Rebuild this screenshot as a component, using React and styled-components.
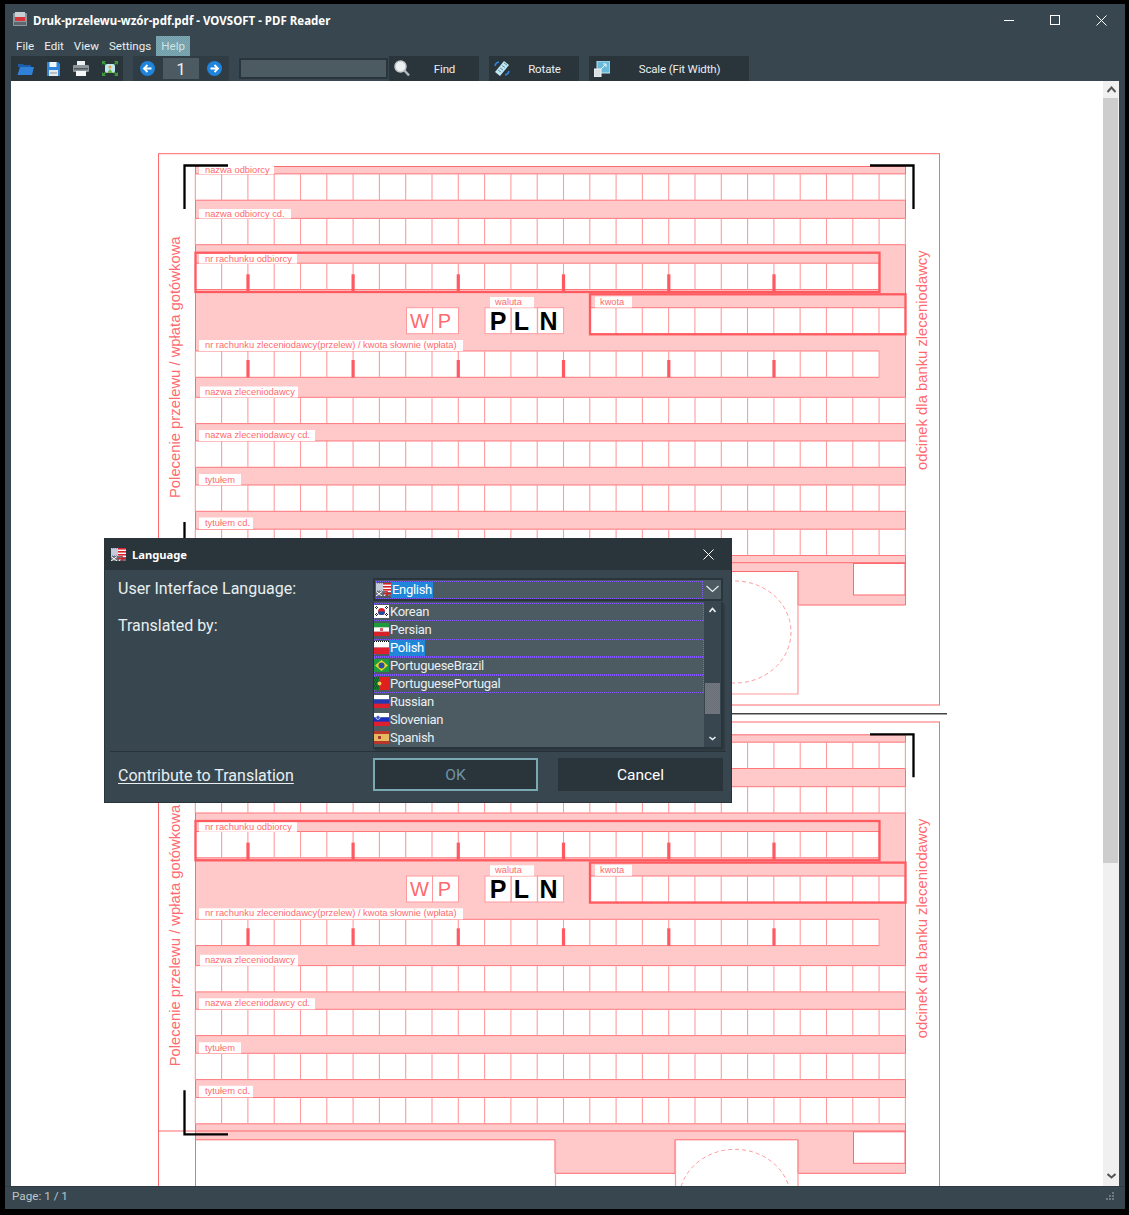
import React from 'react';
import styled, { createGlobalStyle, css } from 'styled-components';

const UI_FONT = `Roboto, "Noto Sans", "Liberation Sans", sans-serif`;
const TITLE_FONT = `"Noto Sans", "Open Sans", "Liberation Sans", sans-serif`;
const BAR = '#38474f';
const DARK = '#2a343b';
const FIELD = '#4c5a62';
const TEXT = '#e9eff1';
const BLUE = '#1f86d8';
const LINE = '#ff6a6e';
const SOFT = '#ff9b9e';
const PINK = '#ffc9ca';
const FOCUS = '#8358ff';
const PDF_FONT = `"Liberation Sans", Arial, sans-serif`;

const GlobalStyle = createGlobalStyle`
  html, body { margin: 0; padding: 0; background: #000; }
  body { font-family: ${UI_FONT}; }
`;

const dither = (a, b) => css`
  background-color: ${a};
  background-image: repeating-conic-gradient(${b} 0 25%, transparent 0 50%);
  background-size: 2px 2px;
`;

// the dotted focus frame of the Windows list box, one pixel on, one off
const focusFrame = css`
  background-image:
    repeating-linear-gradient(90deg, ${FOCUS} 0 1px, transparent 1px 2px),
    repeating-linear-gradient(90deg, ${FOCUS} 0 1px, transparent 1px 2px),
    repeating-linear-gradient(0deg, ${FOCUS} 0 1px, transparent 1px 2px),
    repeating-linear-gradient(0deg, ${FOCUS} 0 1px, transparent 1px 2px);
  background-size: 100% 1px, 100% 1px, 1px 100%, 1px 100%;
  background-position: 0 0, 0 100%, 0 0, 100% 0;
  background-repeat: no-repeat;
`;

const Screen = styled.div`
  width: 1129px;
  height: 1215px;
  padding: 4px 4px 6px 5px;
  box-sizing: border-box;
  background: #000;
`;

const Window = styled.div`
  position: relative;
  width: 100%;
  height: 100%;
  display: flex;
  flex-direction: column;
  background: ${BAR};
  overflow: hidden;
`;

const TitleBar = styled.div`
  height: 32px;
  display: flex;
  align-items: center;
  padding-left: 7px;
  flex: none;
`;

const WindowTitle = styled.span`
  margin-left: 5px;
  font-family: ${TITLE_FONT};
  color: #fff;
  font-size: 11.5px;
  font-weight: 700;
  white-space: nowrap;
`;

const WindowButtons = styled.div`
  margin-left: auto;
  display: flex;
  gap: 36px;
  padding-right: 18px;
  color: #fff;
`;

const MenuBar = styled.div`
  height: 20px;
  display: flex;
  padding-left: 6px;
  flex: none;
`;

const MenuItem = styled.div`
  padding: 0 5px;
  line-height: 20px;
  font-size: 11.6px;
  color: ${(p) => (p.$active ? '#cfe3e6' : TEXT)};
  ${(p) => p.$active && dither('#6f9ca8', '#7fa9b3')}
`;

const ToolBar = styled.div`
  height: 25px;
  display: flex;
  gap: 10px;
  padding-left: 6px;
  flex: none;
`;

const ToolGroup = styled.div`
  width: ${(p) => p.$w}px;
  display: flex;
  align-items: center;
  background: ${DARK};
  box-sizing: border-box;
`;

const IconStrip = styled(ToolGroup)`
  justify-content: space-between;
  padding: 0 5px 0 6px;
`;

const PageGroup = styled(ToolGroup)`
  ${dither('#2e3a41', '#333f46')}
  padding: 0 7px;
  justify-content: space-between;
`;

const PageNumber = styled.div`
  width: 36px;
  height: 21px;
  line-height: 22px;
  background: ${FIELD};
  color: ${TEXT};
  text-align: center;
  font-size: 17px;
`;

const SearchBox = styled.div`
  width: 149px;
  height: 21px;
  margin-top: 2px;
  margin-right: -10px;
  background: ${FIELD};
  border: 2px solid ${DARK};
  box-sizing: border-box;
`;

const ToolButton = styled(ToolGroup)`
  padding-left: 5px;
  ${(p) => p.$first && 'margin-left: 1px;'}
`;

const ToolLabel = styled.span`
  flex: 1;
  text-align: center;
  font-size: 11.5px;
  letter-spacing: -0.15px;
  color: ${TEXT};
  white-space: nowrap;
`;

const Main = styled.div`
  flex: 1;
  min-height: 0;
  display: flex;
  margin: 0 6px;
`;

const DocView = styled.div`
  flex: 1;
  min-width: 0;
  background: #fff;
  overflow: hidden;
`;

const DocPage = styled.svg`
  display: block;
`;

const ScrollTrack = styled.div`
  width: 16px;
  display: flex;
  flex-direction: column;
  background: #f0f0f0;
  color: #555;
`;

const ScrollEnd = styled.div`
  height: 17px;
  display: flex;
  align-items: center;
  justify-content: center;
  ${(p) => p.$bottom && 'margin-top: auto; margin-bottom: 1px;'}
`;

const ScrollThumb = styled.div`
  height: 765px;
  margin-right: 1px;
  background: #cdcdcd;
`;

const StatusBar = styled.div`
  height: 23px;
  flex: none;
  display: flex;
  align-items: center;
  justify-content: space-between;
  padding: 0 10px 4px 7px;
  font-size: 11.7px;
  color: #bcc6ca;
  border-top: 1px solid #2f3b42;
  box-sizing: border-box;
`;

const Dialog = styled.div`
  position: absolute;
  left: 99px;
  top: 534px;
  width: 628px;
  height: 265px;
  box-sizing: border-box;
  background: ${BAR};
  display: flex;
  flex-direction: column;
  outline: 1px solid ${DARK};
  outline-offset: -1px;
`;

const DialogTitle = styled.div`
  height: 32px;
  flex: none;
  display: flex;
  align-items: center;
  padding: 0 18px 0 7px;
  background: ${DARK};
  color: #fff;
`;

const DialogCaption = styled.span`
  margin-left: 6px;
  font-family: ${TITLE_FONT};
  font-size: 11.2px;
  font-weight: 700;
`;

const DialogClose = styled.span`
  margin-left: auto;
  display: flex;
`;

const DialogBody = styled.div`
  display: grid;
  grid-template-columns: 255px 350px;
  padding: 8px 0 0 14px;
  height: 181px;
  box-sizing: border-box;
  flex: none;
`;

const FieldLabels = styled.div`
  display: flex;
  flex-direction: column;
  gap: 15px;
`;

const FieldLabel = styled.div`
  height: 22px;
  line-height: 22px;
  font-size: 16px;
  color: ${TEXT};
`;

const LanguagePicker = styled.div`
  position: relative;
`;

const Combo = styled.div`
  height: 23px;
  display: flex;
  box-sizing: border-box;
  border: 2px solid ${DARK};
  background: ${FIELD};
`;

const ComboValue = styled.div`
  flex: 1;
  margin: 1px 0 0 1px;
  height: 18px;
  padding-bottom: 1px;
  box-sizing: border-box;
  display: flex;
  align-items: center;
  ${focusFrame}
`;

const ComboArrow = styled.div`
  width: 18px;
  display: flex;
  align-items: center;
  justify-content: center;
  color: ${TEXT};
`;

const ListBox = styled.div`
  margin-top: 1px;
  height: 147px;
  display: flex;
  box-sizing: border-box;
  border-left: 1px solid ${DARK};
  border-right: 2px solid ${DARK};
  border-bottom: 2px solid ${DARK};
  background: ${FIELD};
  box-shadow: 2px 2px 0 #2f3b42;
`;

const ListItems = styled.div`
  flex: 1;
  padding-top: 1px;
`;

const ListRow = styled.div`
  height: 18px;
  padding-bottom: 1px;
  box-sizing: border-box;
  display: flex;
  align-items: center;
  ${(p) => p.$focus && focusFrame}
`;

const ItemText = styled.span`
  font-size: 13px;
  letter-spacing: -0.3px;
  line-height: 16px;
  padding: 0 ${(p) => (p.$selected ? '1px' : '0')} 0 1px;
  color: ${(p) => (p.$selected ? '#fff' : TEXT)};
  background: ${(p) => (p.$selected ? BLUE : 'transparent')};
`;

const ListScroll = styled.div`
  width: 17px;
  position: relative;
  background: ${BAR};
  color: ${TEXT};
  display: flex;
  flex-direction: column;
  justify-content: space-between;
  align-items: center;
  padding: 5px 0;
  box-sizing: border-box;
`;

const ListThumb = styled.div`
  position: absolute;
  left: 1px;
  top: 81px;
  width: 15px;
  height: 31px;
  ${dither('#696f78', '#74787f')}
`;

const Divider = styled.div`
  height: 1px;
  flex: none;
  margin: 0 6px;
  background: #28323a;
`;

const DialogFooter = styled.div`
  display: grid;
  grid-template-columns: 255px 165px 165px;
  padding: 6px 0 0 14px;
  align-items: center;
`;

const LinkText = styled.a`
  font-size: 16px;
  line-height: 21px;
  padding-top: 2px;
  color: ${TEXT};
  text-decoration: underline;
  text-underline-offset: 2px;
`;

const DialogButton = styled.div`
  height: 33px;
  line-height: 31px;
  box-sizing: border-box;
  text-align: center;
  font-size: 15.5px;
  background: ${DARK};
  border: 2px solid ${(p) => (p.$focus ? '#7aa9b3' : DARK)};
  color: ${(p) => (p.$disabled ? '#6f94a4' : '#fff')};
  ${(p) => p.$push && 'margin-left: 20px; width: 165px;'}
`;

const Flag = ({ children }) => (
  <svg width="15" height="13" viewBox="0 0 15 13" style={{ flex: 'none' }}>
    {children}
  </svg>
);

const Bands = ({ colors }) => {
  const h = 13 / colors.length;
  return colors.map((c, i) => <rect key={i} x="0" y={i * h} width="15" height={h + 0.2} fill={c} />);
};

const flags = {
  English: (
    <Flag>
      <rect width="15" height="13" fill="#fff" />
      {[0, 3, 6].map((y) => <rect key={y} x="7" y={y} width="8" height="1.600" fill="#d8222a" />)}
      <rect width="7" height="8" fill="#8d97b8" />
      <path d="M0 1h7M0 3h7M0 5h7M0 7h7" stroke="#fff" strokeWidth="1" strokeDasharray="1 1" />
      <path d="M1 2h6M1 4h6M1 6h6" stroke="#fff" strokeWidth="1" strokeDasharray="1 1" />
      <rect y="8" width="15" height="5" fill="#6b727c" />
      <path d="M0 8.500l6 4.500M6 8.500L0 13M8 13l3-4.500h4" stroke="#fff" strokeWidth="1" fill="none" />
      <path d="M11 8v5M7 10.500h8" stroke="#c8222a" strokeWidth="1.500" />
    </Flag>
  ),
  Korean: (
    <Flag>
      <rect width="15" height="13" fill="#fff" />
      <circle cx="7.5" cy="6.5" r="3.5" fill="#d8222a" />
      <path d="M4 6.5a3.5 3.5 0 0 0 7 0z" fill="#1a4ea0" />
      <path d="M1 2l2 2M2 1l2 2M11 9l2 2M12 8l2 2M13 1l-2 2M14 2l-2 2M3 8l-2 2M4 9l-2 2" stroke="#222" strokeWidth="1" />
    </Flag>
  ),
  Persian: (
    <Flag>
      <Bands colors={['#1f9a3c', '#fff', '#d8222a']} />
      <rect x="6" y="5" width="3" height="3" fill="#d8606a" />
    </Flag>
  ),
  Polish: (
    <Flag>
      <Bands colors={['#fff', '#e01f2e']} />
      <path d="M0 0.500h15" stroke="#000" strokeWidth="1" strokeDasharray="1 1" />
    </Flag>
  ),
  PortugueseBrazil: (
    <Flag>
      <rect width="15" height="13" fill="#1f9a3c" />
      <path d="M7.5 1L14 6.5 7.5 12 1 6.5z" fill="#e8d52a" />
      <circle cx="7.5" cy="6.5" r="3" fill="#2a4fa0" />
    </Flag>
  ),
  PortuguesePortugal: (
    <Flag>
      <rect width="15" height="13" fill="#e01f1f" />
      <rect width="5" height="13" fill="#12802c" />
      <path d="M0 1h5M1 3h4M0 5h5M1 7h4M0 9h5M1 11h4" stroke="#123" strokeWidth="1" strokeDasharray="1 1" />
      <circle cx="5.5" cy="6.5" r="2" fill="#f0d050" />
    </Flag>
  ),
  Russian: <Flag><Bands colors={['#fff', '#2438b0', '#e01f2e']} /></Flag>,
  Slovenian: (
    <Flag>
      <Bands colors={['#fff', '#1a2fc0', '#e01f2e']} />
      <circle cx="4" cy="4.5" r="2" fill="#3a56c8" stroke="#fff" strokeWidth="0.6" />
    </Flag>
  ),
  Spanish: (
    <Flag>
      <rect width="15" height="13" fill="#b8362c" />
      <rect y="3" width="15" height="7" fill="#e8b860" />
      <rect x="4" y="5" width="3" height="3" fill="#a83a2c" />
    </Flag>
  ),
};

const languages = [
  { name: 'Korean', focus: true },
  { name: 'Persian' },
  { name: 'Polish', focus: true, selected: true },
  { name: 'PortugueseBrazil', focus: true },
  { name: 'PortuguesePortugal', focus: true },
  { name: 'Russian' },
  { name: 'Slovenian' },
  { name: 'Spanish' },
];

const Chevron = ({ up, w = 9, h = 5, sw = 2 }) => (
  <svg width={w} height={h + 2} viewBox={`0 0 ${w} ${h + 2}`} fill="none" stroke="currentColor" strokeWidth={sw}>
    <path d={up ? `M0.5 ${h + 1}L${w / 2} 1.5L${w - 0.5} ${h + 1}` : `M0.5 1L${w / 2} ${h - 0.5}L${w - 0.5} 1`} />
  </svg>
);

const CloseGlyph = () => (
  <svg width="11" height="11" viewBox="0 0 11 11" stroke="currentColor" strokeWidth="1">
    <path d="M0.5 0.5l10 10M10.5 0.5l-10 10" />
  </svg>
);

const AppIcon = () => (
  <svg width="16" height="16" viewBox="0 0 16 16">
    <rect x="1" y="1" width="14" height="13" rx="1" fill="#8d989d" />
    <rect x="3" y="0" width="10" height="6" fill="#c9d0d3" />
    <rect x="3" y="5" width="10" height="4" fill="#d8343c" />
    <rect x="2" y="10" width="12" height="3" fill="#5c676d" />
  </svg>
);

const FolderIcon = () => (
  <svg width="17" height="14" viewBox="0 0 17 14">
    <path d="M1 2h5l1 1h7v2H1z" fill="#1c5fa8" />
    <path d="M3 5h14l-2 8H0.500z" fill="#2f82d8" />
  </svg>
);

const SaveIcon = () => (
  <svg width="13" height="14" viewBox="0 0 13 14">
    <path d="M0 0h11l2 2v12H0z" fill="#2f86dc" />
    <rect x="2.500" y="0" width="7" height="5" fill="#f2f6f8" />
    <rect x="2" y="8" width="9" height="6" fill="#e6eaec" />
    <path d="M3 11h7" stroke="#8a949a" />
  </svg>
);

const PrintIcon = () => (
  <svg width="16" height="15" viewBox="0 0 16 15">
    <rect x="4" y="0" width="8" height="5" fill="#eef1f2" />
    <rect x="0" y="4" width="16" height="7" rx="1" fill="#8c969b" />
    <rect x="1" y="7" width="14" height="1.500" fill="#4e585e" />
    <rect x="3" y="10" width="10" height="5" fill="#f4f6f7" />
  </svg>
);

const FitIcon = () => (
  <svg width="16" height="15" viewBox="0 0 16 15">
    <rect x="3" y="3" width="10" height="9" fill="#bfe6f2" />
    <path d="M5 12l3-4 3 4z" fill="#6db23e" />
    <circle cx="8" cy="6" r="1.500" fill="#e8a23a" />
    <path d="M0 0h4L0 4zM16 0v4l-4-4zM0 15v-4l4 4zM16 15h-4l4-4z" fill="#3f9a3a" />
    <path d="M1 1l3 3M15 1l-3 3M1 14l3-3M15 14l-3-3" stroke="#3f9a3a" strokeWidth="1.500" />
  </svg>
);

const ArrowCircle = ({ left }) => (
  <svg width="15" height="15" viewBox="0 0 15 15" style={left ? undefined : { transform: 'scaleX(-1)' }}>
    <circle cx="7.5" cy="7.5" r="7.5" fill="#1f84dc" />
    <path d="M11.500 7.500H4.500M7.500 4l-3.500 3.500L7.500 11" fill="none" stroke="#fff" strokeWidth="1.800" />
  </svg>
);

const MagnifierIcon = () => (
  <svg width="16" height="17" viewBox="0 0 16 17">
    <circle cx="6.500" cy="6.500" r="5.500" fill="#eef1f2" stroke="#c3cacd" strokeWidth="1.500" />
    <path d="M10.500 10.500l4.500 5" stroke="#b0b8bc" strokeWidth="2.500" />
  </svg>
);

const RotateIcon = () => (
  <svg width="16" height="17" viewBox="0 0 16 17">
    <path d="M10 1l5 4-9 11-5-4z" fill="#bfe6f2" />
    <path d="M4 10l3 2M6 8l3 2M8 5.500l3 2M10 3l3 2" stroke="#5e8ea0" strokeWidth="1" />
    <path d="M1 6a5 5 0 0 1 4-4M15 11a5 5 0 0 1-4 4" fill="none" stroke="#2f86dc" strokeWidth="1.500" />
  </svg>
);

const ScaleIcon = () => (
  <svg width="16" height="16" viewBox="0 0 16 16">
    <rect x="3" y="0" width="13" height="12" fill="#69b9d8" stroke="#bfe6f2" strokeWidth="1" />
    <path d="M7 8l5-5M9 3h3v3" fill="none" stroke="#eaf6fa" strokeWidth="1" />
    <rect x="0" y="8" width="7" height="8" fill="#d8dfe2" stroke="#f2f6f8" strokeWidth="1" />
  </svg>
);

const Grip = () => (
  <svg width="9" height="8" viewBox="0 0 9 8" fill="#6e7a81">
    <rect x="6" y="0" width="2" height="2" />
    <rect x="3" y="3" width="2" height="2" />
    <rect x="6" y="3" width="2" height="2" />
    <rect x="0" y="6" width="2" height="2" />
    <rect x="3" y="6" width="2" height="2" />
    <rect x="6" y="6" width="2" height="2" />
  </svg>
);

// the page of the pdf, drawn in screen coordinates
const CELL = 26.3;
const X0 = 195.3;
const ROW_H = 26.3;
const TICKS = [247.9, 353, 458.2, 563.4, 668.7, 773.9];

const rows = [
  { y: 173.9, n: 27 },
  { y: 218.4, n: 27 },
  { y: 263.2, n: 26 },
  { y: 351, n: 26 },
  { y: 397.3, n: 27 },
  { y: 441, n: 27 },
  { y: 485, n: 27 },
  { y: 529.2, n: 27 },
];

const tags = [
  { x: 199, y: 166, w: 75, h: 8, tx: 205, ty: 173, s: 'nazwa odbiorcy' },
  { x: 199, y: 209, w: 92, h: 9.500, tx: 205, ty: 217, s: 'nazwa odbiorcy cd.' },
  { x: 199, y: 254, w: 98, h: 9.500, tx: 205, ty: 262, s: 'nr rachunku odbiorcy' },
  { x: 199, y: 340, w: 264, h: 11, tx: 205, ty: 348, s: 'nr rachunku zleceniodawcy(przelew) / kwota słownie (wpłata)' },
  { x: 200, y: 386.500, w: 98, h: 11, tx: 205, ty: 395, s: 'nazwa zleceniodawcy' },
  { x: 199, y: 430, w: 116, h: 11, tx: 205, ty: 438, s: 'nazwa zleceniodawcy cd.' },
  { x: 199, y: 474, w: 42, h: 11, tx: 205, ty: 483, s: 'tytułem' },
  { x: 199, y: 517.500, w: 54, h: 11.500, tx: 205, ty: 526, s: 'tytułem cd.' },
  { x: 490, y: 297, w: 44, h: 10.500, tx: 495, ty: 305, s: 'waluta' },
  { x: 595, y: 296.500, w: 37, h: 11, tx: 600, ty: 305, s: 'kwota' },
];

const boxes = [
  { x: 406.500, s: 'W', dx: 0 },
  { x: 432.500, s: 'P', dx: -1 },
  { x: 485, s: 'P', bold: true, dx: 0 },
  { x: 511.300, s: 'L', bold: true, dx: -3 },
  { x: 537.600, s: 'N', bold: true, dx: -2 },
];

const Strip = ({ y, n, x0 = X0 }) => {
  const right = x0 + n * CELL;
  return (
    <g>
      <rect x={x0} y={y} width={n * CELL} height={ROW_H} fill="#fff" />
      <path d={`M${x0} ${y}H${right}M${x0} ${y + ROW_H}H${right}`} stroke={LINE} strokeWidth="0.900" />
      {Array.from({ length: n + 1 }, (_, i) => (
        <path key={i} d={`M${x0 + i * CELL} ${y}V${y + ROW_H}`} stroke={SOFT} strokeWidth="1.100" />
      ))}
    </g>
  );
};

const Corner = ({ d }) => <path d={d} fill="none" stroke="#000" strokeWidth="2.300" />;

// covered: labels of this copy that lie under the dialog and are not drawn
const FormCopy = ({ dy, marks, covered = [] }) => (
  <g transform={`translate(0 ${dy})`} fontFamily={PDF_FONT}>
    <rect x="158.500" y="153.700" width="781" height="551.300" fill="#fff" stroke={LINE} strokeWidth="1" />
    <path d="M195.500 166.500H905.500V605H798V571.500H675V605H555V571.500H195.500Z" fill={PINK} stroke={LINE} strokeWidth="1" />
    <path d="M195.500 166.500V705" stroke={LINE} strokeWidth="1" />
    <path d="M158.500 562.700H905.500" stroke={LINE} strokeWidth="1" />
    <path d="M555.500 571.500V705M675.500 571.500V694H798V571.500" fill="none" stroke={SOFT} strokeWidth="1.200" />
    <rect x="853.500" y="563.500" width="51.500" height="31.500" fill="#fff" stroke={LINE} strokeWidth="1" />
    <ellipse cx="735" cy="632" rx="56" ry="51" fill="none" stroke={SOFT} strokeWidth="1" strokeDasharray="4 3" />

    {rows.map((r) => <Strip key={r.y} {...r} />)}

    {TICKS.flatMap((x) => [
      <rect key={`a${x}`} x={x - 1.500} y="274.300" width="3.200" height="17" fill="#ff5a62" />,
      <rect key={`b${x}`} x={x - 1.500} y="360" width="3.200" height="17.500" fill="#ff5a62" />,
    ])}

    <rect x="195.500" y="252.700" width="684" height="39.300" fill="none" stroke="#ff5a60" strokeWidth="2.300" />

    {boxes.map((b) => (
      <g key={b.x}>
        <rect x={b.x} y="307.700" width="26" height="26" fill="#fff" stroke={SOFT} strokeWidth="1" />
        <text
          x={b.x + 13 + b.dx}
          y={b.bold ? 330 : 327.500}
          textAnchor="middle"
          fontSize={b.bold ? 25 : 20}
          fontWeight={b.bold ? 700 : 400}
          fill={b.bold ? '#000' : LINE}
        >
          {b.s}
        </text>
      </g>
    ))}

    <Strip y={307.700} n={12} x0={589.700} />
    <rect x="590" y="294.300" width="315.500" height="40" fill="none" stroke="#ff5a60" strokeWidth="2.300" />

    {tags.filter((t) => !covered.includes(t.s)).map((t) => (
      <g key={t.s}>
        <rect x={t.x} y={t.y} width={t.w} height={t.h} fill="#fff" />
        <text x={t.tx} y={t.ty} fontSize="9.300" fill={LINE}>{t.s}</text>
      </g>
    ))}

    <text transform="translate(180 498) rotate(-90)" fontSize="14.800" fill={LINE}>
      Polecenie przelewu / wpłata gotówkowa
    </text>
    <text transform="translate(927 470) rotate(-90)" fontSize="14.800" fill={LINE}>
      odcinek dla banku zleceniodawcy
    </text>

    {marks}
  </g>
);

const PdfPage = () => (
  <DocPage width="1092" height="1105" viewBox="11 81 1092 1105">
    <FormCopy
      dy={0}
      marks={(
        <>
          <Corner d="M184.500 209V165.500H228" />
          <Corner d="M870 165.500H913.500V209" />
          <Corner d="M184.500 522V566" />
        </>
      )}
    />
    <path d="M150 713.800H947" stroke="#444" strokeWidth="1.400" />
    <FormCopy
      dy={568.300}
      covered={['nazwa odbiorcy', 'nazwa odbiorcy cd.']}
      marks={(
        <>
          <Corner d="M870 166H913.500V209" />
          <Corner d="M184.500 522V566H228" />
        </>
      )}
    />
  </DocPage>
);

const LanguageDialog = () => (
  <Dialog>
    <DialogTitle>
      {flags.English}
      <DialogCaption>Language</DialogCaption>
      <DialogClose><CloseGlyph /></DialogClose>
    </DialogTitle>
    <DialogBody>
      <FieldLabels>
        <FieldLabel>User Interface Language:</FieldLabel>
        <FieldLabel>Translated by:</FieldLabel>
      </FieldLabels>
      <LanguagePicker>
        <Combo>
          <ComboValue>
            {flags.English}
            <ItemText $selected>English</ItemText>
          </ComboValue>
          <ComboArrow><Chevron w={13} h={7} sw={1.200} /></ComboArrow>
        </Combo>
        <ListBox>
          <ListItems>
            {languages.map((l) => (
              <ListRow key={l.name} $focus={l.focus}>
                {flags[l.name]}
                <ItemText $selected={l.selected}>{l.name}</ItemText>
              </ListRow>
            ))}
          </ListItems>
          <ListScroll>
            <Chevron up w={7} h={4} sw={1.600} />
            <ListThumb />
            <Chevron w={7} h={4} sw={1.600} />
          </ListScroll>
        </ListBox>
      </LanguagePicker>
    </DialogBody>
    <Divider />
    <DialogFooter>
      <LinkText>Contribute to Translation</LinkText>
      <DialogButton $focus $disabled>OK</DialogButton>
      <DialogButton $push>Cancel</DialogButton>
    </DialogFooter>
  </Dialog>
);

export default function App() {
  return (
    <Screen>
      <GlobalStyle />
      <Window>
        <TitleBar>
          <AppIcon />
          <WindowTitle>Druk-przelewu-wzór-pdf.pdf - VOVSOFT - PDF Reader</WindowTitle>
          <WindowButtons>
            <svg width="10" height="11" viewBox="0 0 10 11" stroke="currentColor"><path d="M0 5.500h10" /></svg>
            <svg width="10" height="11" viewBox="0 0 10 11" fill="none" stroke="currentColor"><rect x="0.500" y="0.500" width="9" height="9" /></svg>
            <CloseGlyph />
          </WindowButtons>
        </TitleBar>
        <MenuBar>
          {['File', 'Edit', 'View', 'Settings'].map((m) => <MenuItem key={m}>{m}</MenuItem>)}
          <MenuItem $active>Help</MenuItem>
        </MenuBar>
        <ToolBar>
          <IconStrip $w={112}>
            <FolderIcon />
            <SaveIcon />
            <PrintIcon />
            <FitIcon />
          </IconStrip>
          <PageGroup $w={96}>
            <ArrowCircle left />
            <PageNumber>1</PageNumber>
            <ArrowCircle />
          </PageGroup>
          <SearchBox />
          <ToolButton $w={90} $first>
            <MagnifierIcon />
            <ToolLabel>Find</ToolLabel>
          </ToolButton>
          <ToolButton $w={90}>
            <RotateIcon />
            <ToolLabel>Rotate</ToolLabel>
          </ToolButton>
          <ToolButton $w={160}>
            <ScaleIcon />
            <ToolLabel>Scale (Fit Width)</ToolLabel>
          </ToolButton>
        </ToolBar>
        <Main>
          <DocView><PdfPage /></DocView>
          <ScrollTrack>
            <ScrollEnd><Chevron up /></ScrollEnd>
            <ScrollThumb />
            <ScrollEnd $bottom><Chevron /></ScrollEnd>
          </ScrollTrack>
        </Main>
        <StatusBar>
          <span>Page: 1 / 1</span>
          <Grip />
        </StatusBar>
        <LanguageDialog />
      </Window>
    </Screen>
  );
}
